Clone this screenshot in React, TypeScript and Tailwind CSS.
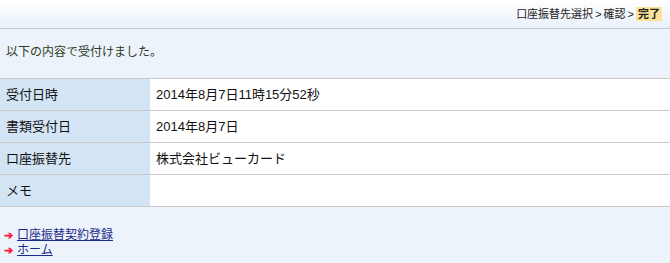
import React from "react";

const font = { fontFamily: '"Liberation Sans", "Noto Sans CJK JP", sans-serif' };

const rows: [string, string][] = [
  ["受付日時", "2014年8月7日11時15分52秒"],
  ["書類受付日", "2014年8月7日"],
  ["口座振替先", "株式会社ビューカード"],
  ["メモ", ""],
];

export default function App() {
  return (
    <div className="w-[670px] h-[263px] bg-[#edf3fb] overflow-hidden text-[#222]" style={font}>
      <div className="h-[29px] bg-gradient-to-b from-white to-[#e9f1fa] border-b border-[#c8c9cb] flex items-center justify-end pr-[8px] text-[11px] text-[#222]">
        <span>口座振替先選択</span>
        <span className="mx-[2px]">&gt;</span>
        <span>確認</span>
        <span className="mx-[2px]">&gt;</span>
        <span className="bg-[#fde39a] font-bold px-[2px] h-[14px] leading-[14px]">完了</span>
      </div>
      <div className="pt-[16px] pl-[6px] text-[12px] leading-[14px] text-[#2f3a1e] mb-[19px]">
        以下の内容で受付けました。
      </div>
      <div className="border-t border-[#c8c8c8]">
        {rows.map(([k, v]) => (
          <div key={k} className="flex h-[32px] border-b border-[#c8c8c8]">
            <div className="w-[150px] bg-[#d3e4f5] flex items-center pl-[6px] text-[13px] text-[#111]">{k}</div>
            <div className="flex-1 bg-white flex items-center pl-[6px] text-[13px] text-[#111]">{v}</div>
          </div>
        ))}
      </div>
      <div className="mt-[21px] pl-[4px] text-[12px] leading-[15px]">
        <div className="flex items-center">
          <span className="text-[#ff1744] text-[11px] font-bold w-[13px]">➔</span>
          <a href="#" className="text-[#1c2a8c] underline">口座振替契約登録</a>
        </div>
        <div className="flex items-center">
          <span className="text-[#ff1744] text-[11px] font-bold w-[13px]">➔</span>
          <a href="#" className="text-[#1c2a8c] underline">ホーム</a>
        </div>
      </div>
    </div>
  );
}
